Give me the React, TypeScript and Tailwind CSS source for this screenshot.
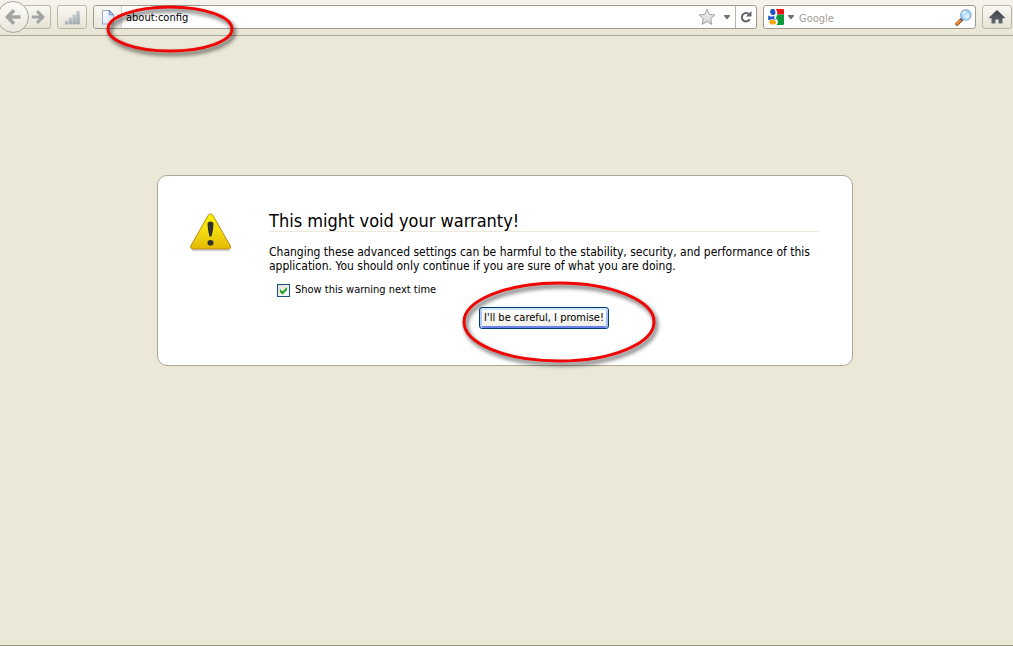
import React, { useState } from "react";

const FONT = "font-['Tahoma','DejaVu_Sans_Condensed','DejaVu_Sans',sans-serif]";

const TOOL_BUTTON =
    "flex items-center justify-center h-6 border border-[#b9b6a8] rounded-[3px] bg-linear-to-b from-[#f8f7f2] to-[#e6e3d6]";

function ArrowIcon({ className, d }: { className: string; d: string }) {
    return (
        <svg className={className} viewBox="0 0 16 16" fill="none" stroke="#a3a5a3" strokeWidth="3.6">
            <path d={d} />
        </svg>
    );
}

function SignalIcon() {
    return (
        <svg className="w-4 h-4" viewBox="0 0 16 16">
            <defs>
                <linearGradient id="bars" x1="0" y1="0" x2="0" y2="1">
                    <stop offset="0" stopColor="#c6ccd0" />
                    <stop offset="1" stopColor="#9da8ae" />
                </linearGradient>
            </defs>
            <g fill="url(#bars)">
                <rect x="1" y="11.5" width="3.4" height="4" rx="1.2" />
                <rect x="4.8" y="8.5" width="3.4" height="7" rx="1.2" />
                <rect x="8.5" y="5.5" width="3.4" height="10" rx="1.2" />
                <rect x="12.2" y="2" width="3.6" height="13.5" rx="1.2" />
            </g>
        </svg>
    );
}

function PageIcon() {
    return (
        <svg className="w-4 h-4" viewBox="0 0 16 16">
            <defs>
                <linearGradient id="sheet" x1="0" y1="0" x2="1" y2="1">
                    <stop offset="0" stopColor="#ffffff" />
                    <stop offset="1" stopColor="#cfe0f5" />
                </linearGradient>
            </defs>
            <path d="M2.5 1.5h7l4 4v9.5h-11z" fill="url(#sheet)" stroke="#9aa8c4" />
            <path d="M9.2 1.2v4.6h4.6z" fill="#a9c6ee" stroke="#6f8fc0" strokeLinejoin="round" />
        </svg>
    );
}

function StarIcon() {
    return (
        <svg className="w-[18px] h-[18px]" viewBox="0 0 18 18">
            <defs>
                <linearGradient id="star" x1="0" y1="0" x2="0" y2="1">
                    <stop offset="0" stopColor="#f4f4f4" />
                    <stop offset="1" stopColor="#d2d2d2" />
                </linearGradient>
            </defs>
            <path
                d="M9 1.3l2.3 5.1 5.6.6-4.2 3.8 1.2 5.6L9 13.6l-4.9 2.8 1.2-5.6L1.1 7l5.6-.6z"
                fill="url(#star)"
                stroke="#a2a2a2"
                strokeLinejoin="round"
            />
        </svg>
    );
}

function CaretIcon() {
    return (
        <svg className="w-[6px] h-[4px]" viewBox="0 0 6 4">
            <path d="M0 0h6v1L3.5 4h-1L0 1z" fill="#707070" />
        </svg>
    );
}

function ReloadIcon() {
    return (
        <svg className="w-3 h-3" viewBox="0 0 12 12">
            <path d="M9.3 3.6A4.2 4.2 0 1 0 9.7 8.3" fill="none" stroke="#62666a" strokeWidth="2" />
            <path d="M11.5 0v5.5H6z" fill="#62666a" />
        </svg>
    );
}

function GoogleIcon() {
    return (
        <svg className="w-4 h-4" viewBox="0 0 16 16">
            <path d="M0 0h16v16H0z" fill="#fff" />
            <path d="M7.5 0H15a1 1 0 0 1 1 1v4.5H9.2C9.6 3 8.8 1.2 7.5 0z" fill="#f01414" />
            <path d="M9.2 5.5H16V15a1 1 0 0 1-1 1H8.5c2.2-2 1.8-4.4-.4-6.4-.6-1 .8-2 1.1-4.1z" fill="#0d9a3c" />
            <ellipse cx="4.8" cy="3" rx="2.6" ry="3.1" fill="#1e50c8" transform="rotate(-15 4.8 3)" />
            <path d="M.2 6.6c2 1.5 4.5 1.3 6.5 0L6 8.9l2.2 2C5.4 9.8 2.5 10 .2 11.2z" fill="#1e50c8" />
            <ellipse cx="4.6" cy="13.2" rx="3.5" ry="2.3" fill="#f5a80c" transform="rotate(8 4.6 13.2)" />
        </svg>
    );
}

function MagnifierIcon() {
    return (
        <svg className="w-[17px] h-[17px]" viewBox="0 0 17 17">
            <defs>
                <radialGradient id="lens" cx="0.6" cy="0.65" r="0.6">
                    <stop offset="0" stopColor="#e2f8ff" />
                    <stop offset="1" stopColor="#8ecbf2" />
                </radialGradient>
            </defs>
            <path d="M7 10l-5 5" stroke="#8a4a1c" strokeWidth="3.6" strokeLinecap="round" />
            <path d="M6.6 9.8l-5 5" stroke="#ee8a36" strokeWidth="2.4" strokeLinecap="round" />
            <path d="M7.4 9.6l-1.6 1.6" stroke="#55607c" strokeWidth="3" />
            <circle cx="10.9" cy="6" r="5.2" fill="url(#lens)" stroke="#8fa9cf" strokeWidth="1.2" />
            <path d="M7.4 5.4c.4-1.8 2-2.7 3.6-2.6" fill="none" stroke="#fff" strokeWidth="1.3" />
        </svg>
    );
}

function HomeIcon() {
    return (
        <svg className="w-4 h-4" viewBox="0 0 16 16">
            <defs>
                <linearGradient id="house" x1="0" y1="0" x2="0" y2="1">
                    <stop offset="0" stopColor="#3c4147" />
                    <stop offset="1" stopColor="#656b72" />
                </linearGradient>
            </defs>
            <path d="M8 1L0 8.6q0 .6.6.6h1.9V14.6h4V10.6h3v4h4V9.2h1.9q.6 0 .6-.6z" fill="url(#house)" />
        </svg>
    );
}

function WarningIcon() {
    return (
        <svg className="w-[42px] h-[40px] shrink-0" viewBox="0 0 42 40">
            <defs>
                <linearGradient id="warn" x1="0" y1="0" x2="0" y2="1">
                    <stop offset="0" stopColor="#fff200" />
                    <stop offset="0.5" stopColor="#f3dc10" />
                    <stop offset="1" stopColor="#e4b800" />
                </linearGradient>
            </defs>
            <path d="M3 37.3h36" stroke="#b5b5b5" strokeWidth="2" strokeLinecap="round" opacity="0.6" />
            <path
                d="M18.2 2.2Q20.5-.6 22.8 2.2L40.3 32.8Q41.4 36 38.4 36H2.8Q-.2 36 .9 32.8z"
                fill="url(#warn)"
                stroke="#b58a28"
            />
            <path d="M17.5 11q0-2.6 3-2.6t3 2.6q0 5-2 12.6h-2q-2-7.6-2-12.6z" fill="#2f3032" />
            <ellipse cx="20.5" cy="29.8" rx="3" ry="2.8" fill="#2f3032" />
        </svg>
    );
}

// Red marker ring laid over a control, sized by its wrapper class
function Highlight({ className, rx, ry }: { className: string; rx: number; ry: number }) {
    return (
        <svg
            aria-hidden="true"
            className={`absolute z-10 pointer-events-none overflow-visible drop-shadow-[2px_3px_2px_rgba(0,0,0,0.7)] ${className}`}
        >
            <ellipse cx="50%" cy="50%" rx={rx} ry={ry} fill="none" stroke="#f00505" strokeWidth="3" />
        </svg>
    );
}

function Toolbar() {
    const [address, setAddress] = useState("about:config");

    return (
        <header className="flex items-start gap-1.5 h-9 pt-[5px] pr-px border-b border-[#aaa797] bg-linear-to-b from-[#f5f3ec] to-[#e9e5d4]">
            <nav className="flex items-center h-6 -ml-[3px]">
                <button
                    type="button"
                    aria-label="Back"
                    className="z-1 flex items-center justify-center w-8 h-8 shrink-0 rounded-full border border-[#a9a79c] bg-linear-to-b from-[#fcfcf9] to-[#e9e6db]"
                >
                    <ArrowIcon className="w-4 h-4" d="M15.5 8H3M9 1.3L2.5 8 9 14.7" />
                </button>
                <button type="button" aria-label="Forward" className={`${TOOL_BUTTON} w-7 -ml-1.5 pr-0.5 pl-1`}>
                    <ArrowIcon className="w-[14px] h-[14px]" d="M1 8h12M7 1.3L13.5 8 7 14.7" />
                </button>
            </nav>

            <button type="button" aria-label="Statistics" className={`${TOOL_BUTTON} w-[30px] shrink-0`}>
                <SignalIcon />
            </button>

            <div className="relative flex flex-1 h-6 border border-[#9d9a8e] rounded-[3px] bg-white">
                <button
                    type="button"
                    aria-label="Site identity"
                    className="flex items-center justify-center w-7 rounded-l-[2px] border-r border-[#d5d3ca] bg-linear-to-b from-[#f9f8f4] to-[#e9e7dd]"
                >
                    <PageIcon />
                </button>
                <input
                    aria-label="Address"
                    value={address}
                    onChange={(e) => setAddress(e.target.value)}
                    className="flex-1 min-w-0 px-1 pt-0.5 text-[11px] text-black outline-none"
                />
                <button type="button" aria-label="Bookmark this page" className="px-1">
                    <StarIcon />
                </button>
                <button type="button" aria-label="Show history" className="flex items-center pl-1 pr-[5px]">
                    <CaretIcon />
                </button>
                <button
                    type="button"
                    aria-label="Reload"
                    className="flex items-center justify-center w-[21px] border-l border-[#b9b7ac]"
                >
                    <ReloadIcon />
                </button>
                <Highlight className="-top-0.5 left-3 w-[128px] h-[50px]" rx={62} ry={22} />
            </div>

            <div className="flex items-center w-[213px] h-6 px-1 border border-[#9d9a8e] rounded-[3px] bg-white">
                <button type="button" aria-label="Choose search engine" className="flex items-center gap-1">
                    <GoogleIcon />
                    <CaretIcon />
                </button>
                <input
                    aria-label="Search"
                    placeholder="Google"
                    className="flex-1 min-w-0 h-full pl-[5px] pr-1 pt-0.5 text-[11px] placeholder:text-[#a49e94] outline-none"
                />
                <button type="button" aria-label="Search" className="-mr-px">
                    <MagnifierIcon />
                </button>
            </div>

            <button type="button" aria-label="Home" className={`${TOOL_BUTTON} w-[30px] shrink-0`}>
                <HomeIcon />
            </button>
        </header>
    );
}

function WarningCard() {
    const [showAgain, setShowAgain] = useState(true);

    return (
        <section className="flex items-start gap-[37px] w-full max-w-[696px] pt-[35px] pb-9 pl-8 pr-[33px] border border-[#aaa797] rounded-[10px] bg-white">
            <div className="pt-0.5">
                <WarningIcon />
            </div>
            <div className="flex-1 min-w-0">
                <h1 className="text-[18px] leading-5 mb-[13px] border-b border-[#ece9d8]">
                    This might void your warranty!
                </h1>
                <p className="text-[12px] leading-[14px]">
                    Changing these advanced settings can be harmful to the stability, security, and performance of this
                    application. You should only continue if you are sure of what you are doing.
                </p>
                <label className="flex items-center gap-[5px] mt-2.5 ml-2 text-[11px] leading-[14px]">
                    <span className="grid">
                        <input
                            type="checkbox"
                            checked={showAgain}
                            onChange={(e) => setShowAgain(e.target.checked)}
                            className="peer appearance-none [grid-area:1/1] w-[13px] h-[13px] border border-[#1c5180] bg-linear-to-br from-[#dcdcd7] to-white"
                        />
                        <svg
                            className="[grid-area:1/1] w-[13px] h-[13px] pointer-events-none invisible peer-checked:visible"
                            viewBox="0 0 13 13"
                        >
                            <path d="M3 5v3l2.5 2.5L10 6V3L5.5 7.5z" fill="#21a121" />
                        </svg>
                    </span>
                    Show this warning next time
                </label>
                <div className="flex justify-center mt-2.5">
                    <div className="relative">
                        <button
                            type="button"
                            className="block h-[22px] px-1 whitespace-nowrap border border-[#003c74] rounded-[3px] text-[11px] leading-[14px] bg-linear-to-b from-white to-[#eeede4] shadow-[inset_0_2px_0_#cee7ff,inset_2px_0_0_#b2cbf4,inset_-2px_0_0_#a5c0f0,inset_0_-2px_0_#6982ee]"
                        >
                            I'll be careful, I promise!
                        </button>
                        <Highlight className="-top-[26px] -left-[18px] w-[196px] h-[82px]" rx={95} ry={39} />
                    </div>
                </div>
            </div>
        </section>
    );
}

export default function App() {
    return (
        <div className={`flex flex-col min-h-screen border-b border-[#96937f] bg-[#ebe8d7] text-black ${FONT}`}>
            <Toolbar />
            <main className="flex-1 flex justify-center items-start pt-[139px] pr-[3px]">
                <WarningCard />
            </main>
        </div>
    );
}
